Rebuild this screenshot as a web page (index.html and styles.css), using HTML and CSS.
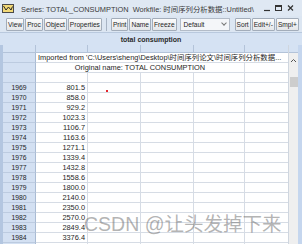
FILE: index.html
```html
<!DOCTYPE html>
<html lang="zh-CN">
 <head>
  <meta charset="utf-8" />
  <title>Series: TOTAL_CONSUMPTION</title>
  <link rel="stylesheet" href="styles.css">
 </head>
 <body>
  <div id="window">
   <div class="titlebar">
    <svg class="app-icon" width="12" height="9" viewBox="0 0 12 9">
     <rect x="0.5" y="0.5" width="11" height="8" fill="#f2d977" stroke="#4a4a4a" />
     <polyline points="1.5,2 4,6 6.5,3 9,6 10.5,2.5" fill="none" stroke="#2a2a2a" stroke-width="1" />
    </svg>
    <span class="title">Series: TOTAL_CONSUMPTION&nbsp; Workfile: 时间序列分析数据::Untitled\</span>
    <svg class="controls" width="34" height="10" viewBox="0 0 34 10">
     <line x1="1" y1="7.5" x2="7" y2="7.5" stroke="#333" stroke-width="1.2" />
     <rect x="12.5" y="2.5" width="6" height="5" fill="none" stroke="#333" />
     <line x1="12.5" y1="3.5" x2="18.5" y2="3.5" stroke="#333" />
     <path d="M25 2.5 L30 7.5 M30 2.5 L25 7.5" stroke="#333" stroke-width="1.2" />
    </svg>
   </div>

   <div class="toolbar">
    <span class="btn">View</span>
    <span class="btn">Proc</span>
    <span class="btn">Object</span>
    <span class="btn">Properties</span>
    <span class="sep"></span>
    <span class="btn">Print</span>
    <span class="btn">Name</span>
    <span class="btn">Freeze</span>
    <span class="select">Default<i class="caret"></i></span>
    <span class="btn">Sort</span>
    <span class="btn">Edit+/-</span>
    <span class="btn">Smpl+</span>
   </div>

   <div class="caption">total consumption</div>

   <div class="sheet">
    <div class="grid">
     <div class="row head">
      <span class="rh"></span><span></span><span></span><span></span><span></span><span></span>
     </div>
     <div class="row">
      <span class="rh"></span><span class="note">Imported from 'C:\Users\sheng\Desktop\时间序列论文\时间序列分析数据...</span>
     </div>
     <div class="row">
      <span class="rh"></span><span class="name">Original name: TOTAL CONSUMPTION</span><span></span>
     </div>
     <div class="row">
      <span class="rh"></span><span></span><span></span><span></span><span></span><span></span>
     </div>
     <div class="row">
      <span class="rh">1969</span><span class="num">801.5</span><span><i class="mark"></i></span><span></span><span></span><span></span>
     </div>
     <div class="row"><span class="rh">1970</span><span class="num">858.0</span><span></span><span></span><span></span><span></span></div>
     <div class="row"><span class="rh">1971</span><span class="num">929.2</span><span></span><span></span><span></span><span></span></div>
     <div class="row"><span class="rh">1972</span><span class="num">1023.3</span><span></span><span></span><span></span><span></span></div>
     <div class="row"><span class="rh">1973</span><span class="num">1106.7</span><span></span><span></span><span></span><span></span></div>
     <div class="row"><span class="rh">1974</span><span class="num">1163.6</span><span></span><span></span><span></span><span></span></div>
     <div class="row"><span class="rh">1975</span><span class="num">1271.1</span><span></span><span></span><span></span><span></span></div>
     <div class="row"><span class="rh">1976</span><span class="num">1339.4</span><span></span><span></span><span></span><span></span></div>
     <div class="row"><span class="rh">1977</span><span class="num">1432.8</span><span></span><span></span><span></span><span></span></div>
     <div class="row"><span class="rh">1978</span><span class="num">1558.6</span><span></span><span></span><span></span><span></span></div>
     <div class="row"><span class="rh">1979</span><span class="num">1800.0</span><span></span><span></span><span></span><span></span></div>
     <div class="row"><span class="rh">1980</span><span class="num">2140.0</span><span></span><span></span><span></span><span></span></div>
     <div class="row"><span class="rh">1981</span><span class="num">2350.0</span><span></span><span></span><span></span><span></span></div>
     <div class="row"><span class="rh">1982</span><span class="num">2570.0</span><span></span><span></span><span></span><span></span></div>
     <div class="row"><span class="rh">1983</span><span class="num">2849.4</span><span></span><span></span><span></span><span></span></div>
     <div class="row"><span class="rh">1984</span><span class="num">3376.4</span><span></span><span></span><span></span><span></span></div>
     <div class="row"><span class="rh"></span><span></span><span></span><span></span><span></span><span></span></div>
    </div>
    <div class="vscroll">
     <div class="corner"></div>
     <div class="track">
      <svg class="arrow" width="7" height="5" viewBox="0 0 7 5">
       <polyline points="1,4 3.5,1.5 6,4" fill="none" stroke="#555" stroke-width="1" />
      </svg>
      <div class="thumb"></div>
     </div>
    </div>
   </div>

   <div class="watermark">CSDN @让头发掉下来</div>
  </div>
 </body>
</html>
```

FILE: styles.css
```css
* { margin: 0; padding: 0; box-sizing: border-box; }
body {
  width: 302px;
  height: 244px;
  overflow: hidden;
  font-family: "Liberation Sans", "Noto Sans CJK SC", sans-serif;
  color: #1e1e1e;
  background-color: #dce6f2;
}
#window {
  position: relative;
  width: 302px;
  height: 244px;
  overflow: hidden;
}

/* title bar */
.titlebar {
  display: flex;
  align-items: center;
  height: 16px;
  padding-left: 2px;
  background-color: #dfe8f3;
}
.app-icon { flex: none; }
.title {
  flex: 1;
  margin-left: 7px;
  font-size: 7.4px;
  color: #3a3a3a;
  white-space: nowrap;
  overflow: hidden;
}
.controls {
  flex: none;
  margin-right: 5px;
}

/* toolbar */
.toolbar {
  display: flex;
  align-items: center;
  gap: 1px;
  height: 16px;
  padding-left: 6px;
  white-space: nowrap;
  overflow: hidden;
}
.btn {
  display: flex;
  align-items: center;
  flex: none;
  height: 13px;
  padding: 0 1px;
  font-size: 6.6px;
  border: 1px solid #a3adba;
  border-radius: 1px;
  background: linear-gradient(#fbfbfb, #e4e6e9);
}
.sep {
  flex: none;
  width: 1px;
  height: 13px;
  margin: 0 3px;
  background-color: #a8b4c4;
}
.select {
  display: flex;
  align-items: center;
  justify-content: space-between;
  flex: none;
  width: 50px;
  height: 13px;
  margin: 0 4px 0 2px;
  padding: 0 3px;
  font-size: 6.6px;
  border: 1px solid #b3bcc8;
  background-color: #f4f6f9;
}
.caret {
  width: 4px;
  height: 4px;
  margin-top: -2px;
  border-right: 1px solid #777;
  border-bottom: 1px solid #777;
  transform: rotate(45deg);
}

/* caption */
.caption {
  height: 13px;
  line-height: 13px;
  text-align: center;
  font-size: 7px;
  font-weight: bold;
  color: #2a2a2a;
  background-color: #d5e2f3;
  border-top: 1px solid #b9c9de;
}

/* sheet */
.sheet {
  display: flex;
  height: 199px;
  border-left: 3px solid #b3c6e0;
  border-right: 4px solid #c5d6ee;
  background-color: #fff;
}
.grid {
  width: 285px;
  overflow: hidden;
  flex: none;
}
.row {
  display: grid;
  grid-template-columns: 33px 52px 53px 53px 51px 60px;
  height: 10px;
}
.row > span {
  display: block;
  height: 10px;
  border-right: 1px solid #d6dce5;
  border-bottom: 1px solid #d6dce5;
  font-size: 7.4px;
  line-height: 9px;
  white-space: nowrap;
  overflow: hidden;
}
.row > .rh {
  text-align: center;
  font-size: 6.8px;
  background-color: #d3e0f2;
  border-right-color: #a9bbd3;
  border-bottom-color: #bccbe0;
}
.row.head { height: 8px; }
.row.head > span {
  height: 8px;
  background-color: #d5e2f3;
  border-right-color: #b3c3d9;
  border-bottom-color: #b3c3d9;
}
.num {
  text-align: right;
  padding-right: 2px;
}
.note {
  grid-column: 2 / -1;
  padding-left: 2px;
}
.name {
  grid-column: 2 / 6;
  text-align: center;
}
.mark {
  display: block;
  width: 2px;
  height: 2px;
  margin: 7px 0 0 18px;
  background-color: #e4262c;
}

/* scrollbar */
.vscroll {
  flex: none;
  width: 10px;
  border-left: 1px solid #cfd6df;
  display: flex;
  flex-direction: column;
}
.corner {
  height: 8px;
  background-color: #d5e2f3;
  border-bottom: 1px solid #b3c3d9;
}
.track {
  flex: 1;
  display: flex;
  flex-direction: column;
  align-items: center;
  background-color: #efefef;
}
.arrow { margin-top: 5px; }
.thumb {
  width: 8px;
  height: 10px;
  margin-top: 14px;
  background-color: #cdcdcd;
}

/* watermark */
.watermark {
  position: absolute;
  left: 84px;
  top: 208px;
  font-size: 19.5px;
  color: rgba(105, 105, 105, 0.5);
  white-space: nowrap;
}
```
